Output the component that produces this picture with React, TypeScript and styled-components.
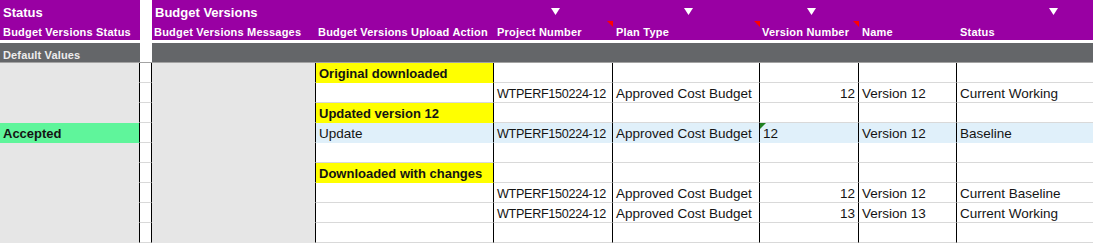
import React from "react";
import styled, { createGlobalStyle } from "styled-components";

const PURPLE = "#9900a3";
const DARK = "#646669";
const GRID = "#d9d9d9";
const GRAY = "#e6e6e6";
const YELLOW = "#ffff00";
const BLUE = "#e0f0fa";
const GREEN = "#5ff59b";

const COLUMNS = "140px 12px 164px 178px 119px 147px 99px 98px 1fr";

const GlobalStyle = createGlobalStyle`
  * { box-sizing: border-box; }
  html, body { margin: 0; padding: 0; background: #fff; }
  body {
    font-family: "Liberation Sans", Arial, sans-serif;
    overflow: hidden;
  }
`;

type RowData = {
  status?: string;
  action?: string;
  section?: boolean;
  project?: string;
  plan?: string;
  version?: string;
  versionText?: boolean;
  name?: string;
  state?: string;
  highlight?: boolean;
};

const PROJECT = "WTPERF150224-12";
const PLAN = "Approved Cost Budget";

const rows: RowData[] = [
  { action: "Original downloaded", section: true },
  { project: PROJECT, plan: PLAN, version: "12", name: "Version 12", state: "Current Working" },
  { action: "Updated version 12", section: true },
  {
    status: "Accepted",
    action: "Update",
    project: PROJECT,
    plan: PLAN,
    version: "12",
    versionText: true,
    name: "Version 12",
    state: "Baseline",
    highlight: true,
  },
  {},
  { action: "Downloaded with changes", section: true },
  { project: PROJECT, plan: PLAN, version: "12", name: "Version 12", state: "Current Baseline" },
  { project: PROJECT, plan: PLAN, version: "13", name: "Version 13", state: "Current Working" },
  {},
];

const Sheet = styled.div`
  width: 1093px;
  display: flex;
  flex-direction: column;
`;

const Row = styled.div<{ $h: number; $gap?: number }>`
  display: grid;
  grid-template-columns: ${COLUMNS};
  height: ${(p) => p.$h}px;
  margin-top: ${(p) => p.$gap ?? 0}px;
`;

const HeadCell = styled.div<{
  $blank?: boolean;
  $span?: number;
  $big?: boolean;
  $center?: boolean;
  $indent?: number;
}>`
  grid-column: span ${(p) => p.$span ?? 1};
  position: relative;
  display: flex;
  align-items: flex-end;
  justify-content: ${(p) => (p.$center ? "center" : "flex-start")};
  padding: 0 0 ${(p) => (p.$big ? 1 : 2)}px ${(p) => p.$indent ?? 3}px;
  background: ${(p) => (p.$blank ? "#fff" : PURPLE)};
  color: #fff;
  font-weight: bold;
  font-size: ${(p) => (p.$big ? 13 : 11)}px;
  letter-spacing: ${(p) => (p.$big ? 0 : 0.2)}px;
  white-space: nowrap;
`;

const FilterArrow = styled.svg`
  align-self: flex-start;
  margin-top: 8px;
  width: 9px;
  height: 7px;
`;

const Comment = styled.span`
  position: absolute;
  top: 0;
  right: 0;
  width: 0;
  height: 0;
  border-top: 6px solid #ff0000;
  border-left: 6px solid transparent;
`;

const DefaultCell = styled.div<{ $blank?: boolean; $span?: number }>`
  grid-column: span ${(p) => p.$span ?? 1};
  display: flex;
  align-items: flex-end;
  padding: 0 0 1px 3px;
  background: ${(p) => (p.$blank ? "#fff" : DARK)};
  border-bottom: 1px solid #a3a3a3;
  color: #ededed;
  font-weight: bold;
  font-size: 11px;
  letter-spacing: 0.15px;
  white-space: nowrap;
`;

const Cell = styled.div<{
  $fill?: string;
  $bold?: boolean;
  $right?: boolean;
  $last?: boolean;
  $tight?: boolean;
}>`
  position: relative;
  display: flex;
  align-items: flex-end;
  justify-content: ${(p) => (p.$right ? "flex-end" : "flex-start")};
  padding: 0 3px 1px;
  background: ${(p) => p.$fill ?? "#fff"};
  border-right: ${(p) => (p.$last ? "none" : "1px solid #000")};
  border-bottom: 1px solid ${(p) => (p.$fill ? "transparent" : GRID)};
  color: #141414;
  font-size: ${(p) => (p.$bold ? 13 : p.$tight ? 12.6 : 13.5)}px;
  letter-spacing: ${(p) => (p.$tight ? -0.3 : 0)}px;
  font-weight: ${(p) => (p.$bold ? "bold" : "normal")};
  white-space: nowrap;
  overflow: hidden;
`;

const TextMarker = styled.span`
  position: absolute;
  top: 0;
  left: 0;
  width: 0;
  height: 0;
  border-top: 6px solid #1f7f1f;
  border-right: 6px solid transparent;
`;

const Arrow = () => (
  <FilterArrow viewBox="0 0 9 7">
    <polygon points="0,0 9,0 4.5,7" fill="#fff" />
  </FilterArrow>
);

const DataRow = ({ r }: { r: RowData }) => {
  const tint = r.highlight ? BLUE : undefined;
  return (
    <Row $h={20}>
      <Cell $fill={r.status ? GREEN : GRAY} $bold>
        {r.status}
      </Cell>
      <Cell />
      <Cell $fill={GRAY} />
      <Cell $fill={r.section ? YELLOW : tint} $bold={r.section}>
        {r.action}
      </Cell>
      <Cell $fill={tint} $tight>
        {r.project}
      </Cell>
      <Cell $fill={tint}>{r.plan}</Cell>
      <Cell $fill={tint} $right={!r.versionText}>
        {r.versionText && <TextMarker />}
        {r.version}
      </Cell>
      <Cell $fill={tint}>{r.name}</Cell>
      <Cell $fill={tint} $last>
        {r.state}
      </Cell>
    </Row>
  );
};

export default function App() {
  return (
    <>
      <GlobalStyle />
      <Sheet>
        <Row $h={21}>
          <HeadCell $big>Status</HeadCell>
          <HeadCell $blank />
          <HeadCell $big $span={2}>
            Budget Versions
          </HeadCell>
          <HeadCell $center>
            <Arrow />
          </HeadCell>
          <HeadCell $center>
            <Arrow />
          </HeadCell>
          <HeadCell $center>
            <Arrow />
          </HeadCell>
          <HeadCell />
          <HeadCell $indent={92}>
            <Arrow />
          </HeadCell>
        </Row>
        <Row $h={19}>
          <HeadCell>Budget Versions Status</HeadCell>
          <HeadCell $blank />
          <HeadCell $indent={2}>Budget Versions Messages</HeadCell>
          <HeadCell $indent={2}>Budget Versions Upload Action</HeadCell>
          <HeadCell>
            Project Number
            <Comment />
          </HeadCell>
          <HeadCell>
            Plan Type
            <Comment />
          </HeadCell>
          <HeadCell $indent={2}>
            Version Number
            <Comment />
          </HeadCell>
          <HeadCell>Name</HeadCell>
          <HeadCell>Status</HeadCell>
        </Row>
        <Row $h={20} $gap={3}>
          <DefaultCell>Default Values</DefaultCell>
          <DefaultCell $blank />
          <DefaultCell $span={7} />
        </Row>
        {rows.map((r, i) => (
          <DataRow key={i} r={r} />
        ))}
      </Sheet>
    </>
  );
}
